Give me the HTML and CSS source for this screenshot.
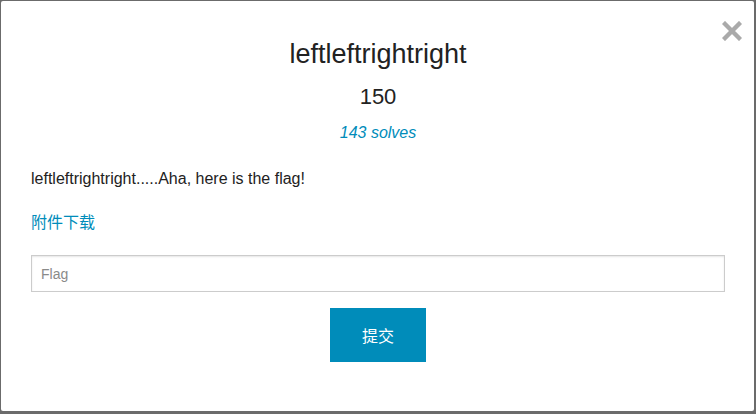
FILE: index.html
```html
<!DOCTYPE html>
<html>
<head>
<meta charset="utf-8">
<link rel="stylesheet" href="styles.css">
</head>
<body>
<div class="modal">
  <button class="close" aria-label="close">
    <svg width="20" height="20" viewBox="0 0 20 20"><path d="M3 3 L17 17 M17 3 L3 17" stroke="#aaaaaa" stroke-width="4.4" stroke-linecap="square" fill="none"/></svg>
  </button>
  <h3 class="title">leftleftrightright</h3>
  <h4 class="points">150</h4>
  <p class="solves">143 solves</p>
  <p class="desc">leftleftrightright.....Aha, here is the flag!</p>
  <a class="attach" href="#">附件下载</a>
  <input class="flag" type="text" placeholder="Flag">
  <div class="actions"><button class="submit">提交</button></div>
</div>
</body>
</html>
```
FILE: styles.css
```css
html, body {
  margin: 0;
  padding: 0;
}
body {
  background: #6b6b6b;
  width: 756px;
  height: 414px;
  overflow: hidden;
  font-family: "Liberation Sans", Arial, "Noto Sans CJK SC", sans-serif;
  color: #222222;
}
.modal {
  position: relative;
  box-sizing: border-box;
  margin: 1px 2px 0 1px;
  height: 410px;
  background: #ffffff;
  border-radius: 2px;
  padding: 37px 29px 0 30px;
  display: flex;
  flex-direction: column;
}
.close {
  position: absolute;
  top: 20px;
  right: 12px;
  padding: 0;
  border: 0;
  background: none;
  width: 20px;
  height: 20px;
  line-height: 0;
}
.title {
  margin: 0;
  font-size: 27px;
  line-height: 32px;
  font-weight: normal;
  text-align: center;
}
.points {
  margin: 14px 0 0;
  font-size: 22px;
  line-height: 26px;
  font-weight: normal;
  text-align: center;
}
.solves {
  margin: 13px 0 0;
  font-size: 16px;
  line-height: 20px;
  font-style: italic;
  text-align: center;
  color: #008cba;
}
.desc {
  margin: 26px 0 0;
  font-size: 16px;
  line-height: 20px;
}
.attach {
  align-self: flex-start;
  margin-top: 24px;
  font-size: 16px;
  line-height: 20px;
  color: #008cba;
  text-decoration: none;
}
.flag {
  margin-top: 22px;
  box-sizing: border-box;
  width: 100%;
  height: 37px;
  border: 1px solid #cccccc;
  box-shadow: inset 0 1px 2px rgba(0, 0, 0, 0.1);
  padding: 0 9px;
  font-family: "Liberation Sans", Arial, sans-serif;
  font-size: 14px;
  color: #222222;
  outline: none;
}
.flag::placeholder {
  color: #8a8a8a;
}
.actions {
  display: flex;
  justify-content: center;
  margin-top: 16px;
}
.submit {
  width: 96px;
  height: 54px;
  border: 0;
  background: #008cba;
  color: #ffffff;
  font-family: "Liberation Sans", "Noto Sans CJK SC", sans-serif;
  font-size: 16px;
  padding: 0;
}
```
